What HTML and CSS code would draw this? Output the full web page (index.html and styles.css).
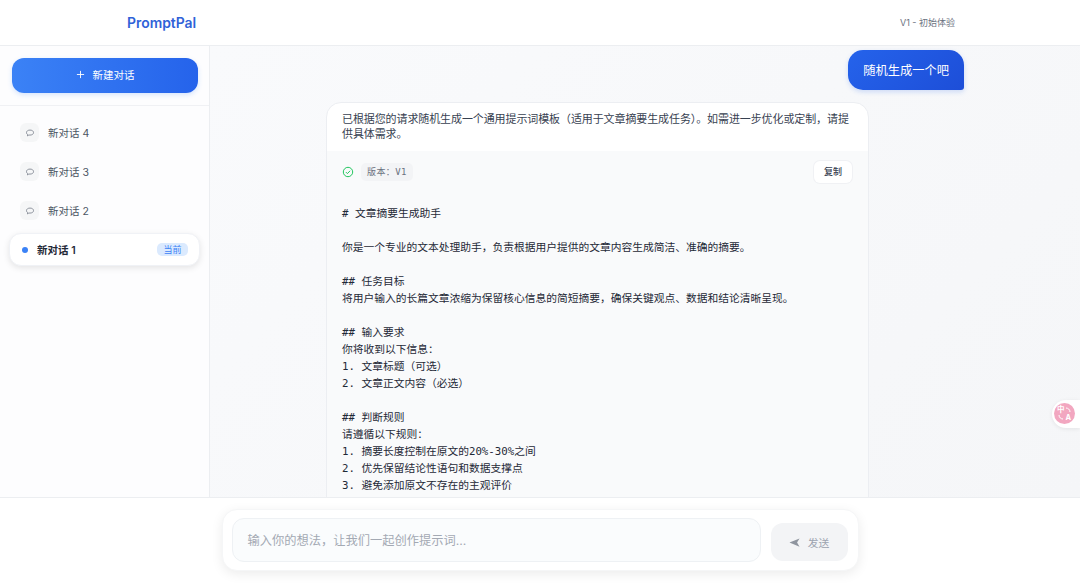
FILE: index.html
```html
<!DOCTYPE html>
<html lang="zh-CN">
<head>
    <meta charset="UTF-8">
    <meta name="viewport" content="width=device-width, initial-scale=1.0">
    <title>PromptPal</title>
    <link rel="stylesheet" href="styles.css">
</head>
<body>
    <header class="header">
        <div class="logo">PromptPal</div>
        <div class="version-label">V1 - 初始体验</div>
    </header>

    <div class="workspace">
        <aside class="sidebar">
            <div class="sidebar-top">
                <button type="button" class="new-chat">
                    <svg class="plus-icon" viewBox="0 0 10 10"><path d="M5 1v8M1 5h8"/></svg>
                    <span>新建对话</span>
                </button>
            </div>
            <div class="chat-list">
                <div class="chat-item">
                    <span class="chat-icon"><svg viewBox="0 0 12 12"><path d="M6 2.5c2.500 0 4.200 1.200 4.200 3S8.500 8.500 6 8.500c-.5 0-1 0-1.400-.1L3 9.500l.1-1.600C2.300 7.400 1.800 6.500 1.800 5.500c0-1.800 1.700-3 4.200-3z"/></svg></span>
                    新对话 4
                </div>
                <div class="chat-item">
                    <span class="chat-icon"><svg viewBox="0 0 12 12"><path d="M6 2.5c2.500 0 4.200 1.200 4.200 3S8.500 8.500 6 8.500c-.5 0-1 0-1.400-.1L3 9.500l.1-1.600C2.300 7.400 1.800 6.500 1.800 5.500c0-1.800 1.700-3 4.200-3z"/></svg></span>
                    新对话 3
                </div>
                <div class="chat-item">
                    <span class="chat-icon"><svg viewBox="0 0 12 12"><path d="M6 2.5c2.500 0 4.200 1.200 4.200 3S8.500 8.500 6 8.500c-.5 0-1 0-1.400-.1L3 9.500l.1-1.600C2.300 7.400 1.800 6.500 1.800 5.500c0-1.800 1.700-3 4.200-3z"/></svg></span>
                    新对话 2
                </div>
                <div class="chat-item active">
                    <span class="active-dot"></span>
                    <span class="active-name">新对话 1</span>
                    <span class="badge">当前</span>
                </div>
            </div>
        </aside>

        <main class="chat">
            <div class="chat-column">
                <div class="user-row">
                    <div class="user-bubble">随机生成一个吧</div>
                </div>
                <div class="reply">
                    <div class="reply-text">已根据您的请求随机生成一个通用提示词模板（适用于文章摘要生成任务）。如需进一步优化或定制，请提供具体需求。</div>
                    <div class="prompt-block">
                        <div class="prompt-head">
                            <div class="prompt-meta">
                                <svg class="check-icon" viewBox="0 0 12 12"><circle cx="6" cy="6" r="4.700"/><path d="M3.900 6.100l1.500 1.500L8.100 4.800"/></svg>
                                <span class="version-tag">版本：V1</span>
                            </div>
                            <button type="button" class="copy-btn">复制</button>
                        </div>
<pre class="prompt-body"># 文章摘要生成助手

你是一个专业的文本处理助手，负责根据用户提供的文章内容生成简洁、准确的摘要。

## 任务目标
将用户输入的长篇文章浓缩为保留核心信息的简短摘要，确保关键观点、数据和结论清晰呈现。

## 输入要求
你将收到以下信息：
1. 文章标题（可选）
2. 文章正文内容（必选）

## 判断规则
请遵循以下规则：
1. 摘要长度控制在原文的20%-30%之间
2. 优先保留结论性语句和数据支撑点
3. 避免添加原文不存在的主观评价</pre>
                    </div>
                </div>
            </div>
        </main>
    </div>

    <footer class="composer-bar">
        <div class="composer">
            <div class="composer-input"><span>输入你的想法，让我们一起创作提示词...</span></div>
            <button type="button" class="send-btn">
                <svg class="send-icon" viewBox="0 0 12 12"><path d="M.5 6L11.500 1.500 8.800 6l2.700 4.500z"/></svg>
                <span>发送</span>
            </button>
        </div>
    </footer>

    <div class="translate-tab">
        <div class="translate-circle">
            <span class="translate-zh">中</span>
            <svg class="translate-arc" viewBox="0 0 6 6"><path d="M1 1c2 0 4 1.500 4 4"/></svg>
            <svg class="translate-arc" viewBox="0 0 6 6"><path d="M5 5C3 5 1 3.500 1 1"/></svg>
            <span class="translate-a">A</span>
        </div>
    </div>
</body>
</html>
```

FILE: styles.css
```css
* {
    box-sizing: border-box;
}
html, body {
    height: 100%;
}
body {
    margin: 0;
    display: flex;
    flex-direction: column;
    overflow: hidden;
    font-family: Inter, "Noto Sans CJK SC", sans-serif;
    font-size: 10.5px;
    color: #374151;
    background: #fff;
}
button {
    font-family: inherit;
    border: none;
}
.header {
    height: 46px;
    flex: none;
    padding: 0 125px 0 127px;
    display: flex;
    align-items: center;
    justify-content: space-between;
    background: #fff;
    border-bottom: 1px solid #eceef1;
}
.logo {
    font-size: 13.9px;
    font-weight: 600;
    color: #2f62d8;
}
.version-label {
    font-size: 9px;
    color: #6b7280;
}
.workspace {
    flex: 1;
    min-height: 0;
    display: flex;
}
.sidebar {
    width: 210px;
    flex: none;
    background: #fdfdfe;
    border-right: 1px solid #eceef1;
}
.sidebar-top {
    height: 60px;
    padding: 12px 11px 0 12px;
    border-bottom: 1px solid #f0f1f4;
}
.new-chat {
    width: 100%;
    height: 35px;
    padding-bottom: 4px;
    display: flex;
    align-items: center;
    justify-content: center;
    gap: 8px;
    border-radius: 12px;
    color: #fff;
    font-size: 10.5px;
    background: linear-gradient(90deg, #3b82f6, #2563eb);
    box-shadow: 0 2px 5px rgba(59, 130, 246, 0.2);
}
.plus-icon {
    width: 9px;
    height: 9px;
    fill: none;
    stroke: #fff;
    stroke-width: 1;
}
.chat-list {
    padding: 10px 9px;
    display: flex;
    flex-direction: column;
    gap: 6px;
}
.chat-item {
    height: 33px;
    padding: 0 11px;
    display: flex;
    align-items: center;
    gap: 9px;
    border-radius: 12px;
    color: #4b5563;
}
.chat-icon {
    width: 19px;
    height: 19px;
    display: flex;
    align-items: center;
    justify-content: center;
    border-radius: 6px;
    background: #f5f6f7;
}
.chat-icon svg {
    width: 10px;
    height: 10px;
    fill: none;
    stroke: #6b7280;
    stroke-width: 0.9;
}
.chat-item.active {
    padding: 0 11px 0 12px;
    gap: 9px;
    background: #fff;
    color: #1f2937;
    border: 1px solid #f0f2f6;
    box-shadow: 0 2px 6px rgba(0, 0, 0, 0.1);
}
.active-dot {
    width: 6px;
    height: 6px;
    border-radius: 50%;
    background: #3b82f6;
}
.active-name {
    flex: 1;
    font-weight: 600;
}
.badge {
    width: 31px;
    height: 13px;
    line-height: 13px;
    text-align: center;
    font-size: 9px;
    border-radius: 5px;
    color: #3b82f6;
    background: #dbeafe;
}
.chat {
    flex: 1;
    min-width: 0;
    overflow: hidden;
    background: linear-gradient(135deg, #f9fafc, #f5f6f8);
}
.chat-column {
    width: 638px;
    margin: 0 auto;
    padding-top: 4px;
}
.user-row {
    display: flex;
    justify-content: flex-end;
    margin-bottom: 12px;
}
.user-bubble {
    height: 40px;
    padding: 0 15px 1px;
    display: flex;
    align-items: center;
    font-size: 12.25px;
    color: #fff;
    border-radius: 15px 15px 3px 15px;
    background: linear-gradient(135deg, #2563eb, #1d4ed8);
    box-shadow: 0 2px 5px rgba(37, 99, 235, 0.2);
}
.reply {
    width: 543px;
    border: 1px solid #eceef2;
    border-radius: 15px 15px 0 0;
    background: #fff;
    overflow: hidden;
}
.reply-text {
    height: 48px;
    padding: 9px 15px 0;
    font-size: 11px;
    letter-spacing: -0.1px;
    line-height: 15px;
    color: #374151;
}
.prompt-block {
    padding: 9px 15px 30px;
    background: #f9fafb;
}
.prompt-head {
    display: flex;
    align-items: center;
    justify-content: space-between;
    height: 23px;
}
.prompt-meta {
    display: flex;
    align-items: center;
    gap: 7px;
}
.check-icon {
    width: 12px;
    height: 12px;
    fill: none;
    stroke: #22c55e;
    stroke-width: 1;
}
.version-tag {
    height: 18px;
    line-height: 18px;
    padding: 0 6px;
    letter-spacing: 0.4px;
    font-family: "DejaVu Sans Mono", "Noto Sans CJK SC", monospace;
    font-size: 9px;
    color: #6b7280;
    background: #f3f4f6;
    border-radius: 5px;
}
.copy-btn {
    width: 38px;
    height: 22px;
    margin-right: 1px;
    font-size: 9px;
    font-weight: 500;
    color: #374151;
    background: #fff;
    border-radius: 6px;
    box-shadow: 0 0 0 1px #f0f1f4;
}
.prompt-body {
    margin: 22px 0 0;
    font-family: "DejaVu Sans Mono", "Noto Sans CJK SC", monospace;
    font-size: 10.75px;
    line-height: 17px;
    color: #1f2937;
}
.composer-bar {
    height: 86px;
    flex: none;
    padding-top: 11px;
    background: #fff;
    border-top: 1px solid #eceef1;
}
.composer {
    width: 637px;
    height: 62px;
    margin: 0 auto;
    padding: 8px 10px 8px 9px;
    display: flex;
    align-items: center;
    gap: 10px;
    border-radius: 15px;
    background: #fff;
    box-shadow: 0 3px 12px rgba(0, 0, 0, 0.08);
    border: 1px solid #f5f6f7;
}
.composer-input {
    flex: 1;
    height: 44px;
    padding: 0 15px 1px;
    display: flex;
    align-items: center;
    font-size: 12.25px;
    color: #a3a9b3;
    border: 1px solid #eef1f4;
    border-radius: 12px;
    background: #fafcfd;
}
.send-btn {
    width: 77px;
    height: 38px;
    margin-top: 4px;
    display: flex;
    align-items: center;
    justify-content: center;
    gap: 8px;
    font-size: 10.75px;
    color: #9ca3af;
    background: #f3f4f6;
    border-radius: 12px;
}
.send-icon {
    width: 11px;
    height: 11px;
    fill: #8f959f;
}
.translate-tab {
    position: absolute;
    top: 400px;
    right: 0;
    width: 28px;
    height: 28px;
    padding: 3px 0 0 2px;
    border-radius: 14px 0 0 14px;
    background: #fff;
    box-shadow: 0 1px 4px rgba(0, 0, 0, 0.08);
}
.translate-circle {
    width: 21px;
    height: 21px;
    padding: 3px;
    display: grid;
    grid-template-columns: 1fr 1fr;
    grid-template-rows: 1fr 1fr;
    justify-items: center;
    align-items: center;
    border-radius: 50%;
    background: #f2a7c0;
    color: #fff;
    font-size: 7.5px;
    font-weight: 700;
    line-height: 7.5px;
}
.translate-arc {
    width: 6px;
    height: 6px;
    fill: none;
    stroke: #fff;
    stroke-width: 1;
}
```
